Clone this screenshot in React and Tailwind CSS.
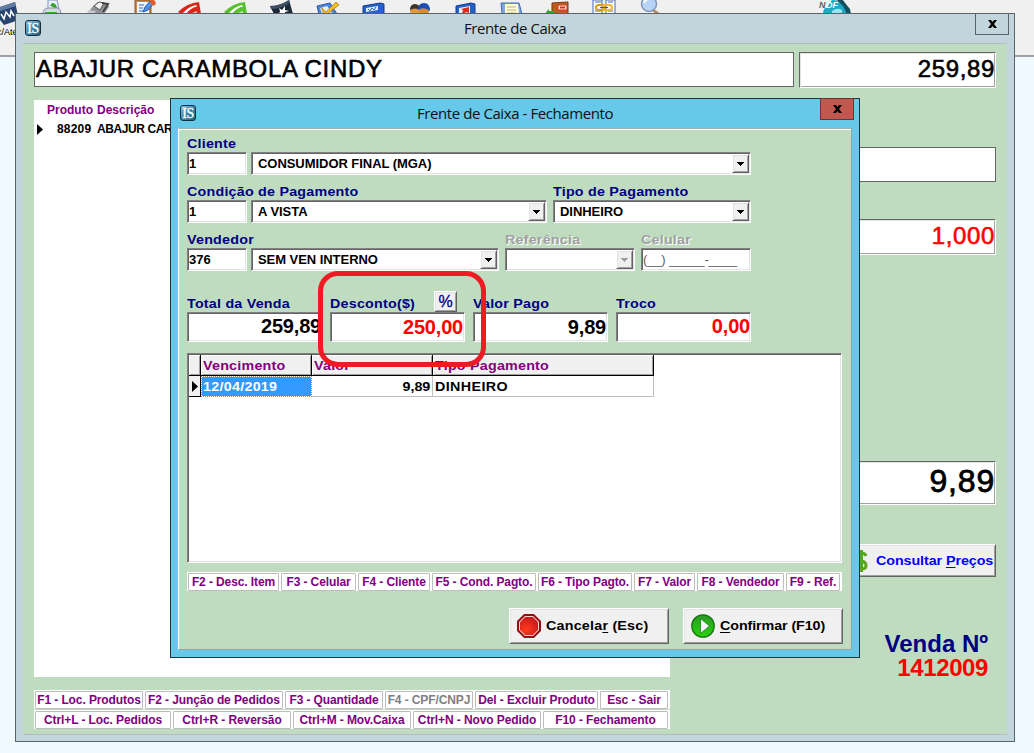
import React from "react";

const sys = "font-bold text-[13px] whitespace-nowrap";
const sunken =
  "bg-white border border-t-[#808080] border-l-[#808080] border-b-white border-r-white shadow-[inset_1px_1px_0_#646464,inset_-1px_-1px_0_#e3e3e3]";
const raised =
  "bg-[#f0f0f0] border border-t-white border-l-white border-b-[#646464] border-r-[#646464] shadow-[inset_1px_1px_0_#e3e3e3,inset_-1px_-1px_0_#a0a0a0]";
const flat = "bg-white border border-[#646464]";
const etched =
  "bg-white border border-t-[#646464] border-l-[#646464] border-b-white border-r-white shadow-[inset_1px_1px_0_#e3e3e3,inset_-1px_-1px_0_#a0a0a0]";

function Wide({ children, className = "tracking-[0.2px]", right }) {
  return (
    <span className={`inline-block scale-x-[1.1] ${right ? "origin-right" : "origin-left"} ${className}`}>
      {children}
    </span>
  );
}

function AppIcon() {
  return (
    <div className="flex h-4 w-4 items-center justify-center rounded-[3px] border border-[#12303f] bg-linear-to-br from-[#8fc3de] via-[#3f87ad] to-[#2a617f] pt-px font-['Liberation_Serif',serif] text-[14px] leading-none tracking-[-0.4px] text-white [-webkit-text-stroke:0.3px]">
      IS
    </div>
  );
}

function Caption({ children }) {
  return (
    <span className="-mt-[2px] font-['Open_Sans',sans-serif] text-[15px] leading-5 tracking-[-0.42px] whitespace-nowrap text-[#111]">
      {children}
    </span>
  );
}

function Cross() {
  return (
    <svg width="9" height="8" viewBox="0 0 9 8">
      <path d="M0 0h3l1.5 2L6 0h3L6 4l3 4H6L4.500 6 3 8H0l3-4z" fill="#000" />
    </svg>
  );
}

function Label({ children, disabled }) {
  return (
    <div
      className={`${sys} h-[17px] leading-[17px] ${
        disabled ? "text-[#a0a0a0] [text-shadow:1px_1px_0_#fff]" : "text-[#000080]"
      }`}
    >
      <Wide>{children}</Wide>
    </div>
  );
}

function Edit({ children, className = "" }) {
  return (
    <div className={`${sunken} h-[23px] pl-px text-[13px] leading-[21px] ${className}`}>
      {children}
    </div>
  );
}

function Combo({ children, className = "", disabled }) {
  return (
    <div
      className={`${sunken} flex h-[23px] items-center justify-between pl-[6px] pr-px text-[13px] font-bold tracking-[-0.05px] whitespace-nowrap ${className}`}
    >
      <span>{children}</span>
      <span className={`${raised} flex h-[19px] w-[17px] items-center justify-center`}>
        <svg width="7" height="4" viewBox="0 0 7 4" shapeRendering="crispEdges">
          <path d="M0 0h7v1H6v1H5v1H4v1H3V3H2V2H1V1H0z" fill={disabled ? "#a0a0a0" : "#000"} />
        </svg>
      </span>
    </div>
  );
}

function Key({ children, className = "", muted }) {
  return (
    <div
      className={`flex h-[18px] shrink-0 items-center justify-center rounded-[1px] border border-[#bdbdbd] bg-white text-[12px] font-bold leading-none tracking-[-0.1px] whitespace-nowrap ${
        muted ? "text-[#808080]" : "text-[#800080]"
      } ${className}`}
    >
      {children}
    </div>
  );
}

const toolIcons = [
  <g key="printer">
    <path d="M8 9V0h9l2 9z" fill="#e8f1fb" stroke="#7f95b5" />
    <path d="M12 3q6 0 5 9h-3q1-6-4-6z" fill="#35a528" />
    <path d="M3 14q0-6 6-6l9 0q3 1 3 6z" fill="#d3dae4" stroke="#8390a4" />
    <path d="M5 13h12" stroke="#40a832" strokeWidth="2" />
  </g>,
  <g key="fax">
    <path d="M1 14l6-8 5-4 10 2 1 3-5 7z" fill="#8f9193" />
    <path d="M8 6l5-4 5 1-4 7z" fill="#eee" stroke="#555" />
    <path d="M16 3l6 1-5 8" fill="none" stroke="#444" strokeWidth="2" />
    <path d="M2 10l8 1-2 3H1z" fill="#c8cacc" />
  </g>,
  <g key="clipboard">
    <path d="M3 0h16v14H3z" fill="#c98a4b" stroke="#8d5523" />
    <path d="M5 2h12v12H5z" fill="#eef6ff" />
    <path d="M7 5h5M7 8h4M7 11h6" stroke="#6297dc" strokeWidth="1.500" />
    <path d="M11 12l2-5 6-7 3 3-6 7z" fill="#5295e8" stroke="#275ca7" />
    <path d="M18 0h4l2 3-2 3-4-3z" fill="#e95b2c" />
  </g>,
  <g key="red">
    <path d="M0 12Q9 3 21 2l2 12H3z" fill="#d92718" />
    <path d="M5 13Q10 7 18 5l1 1.500Q12 8 8 14z" fill="#fff" />
    <path d="M13 14q2-2 6-3v3z" fill="#f6b1a9" />
  </g>,
  <g key="green">
    <path d="M0 12Q9 3 21 2l2 12H3z" fill="#57c12c" />
    <path d="M5 13Q10 7 18 5l1 1.500Q12 8 8 14z" fill="#fff" />
    <path d="M13 14q2-2 6-3v3z" fill="#c9efb8" />
  </g>,
  <g key="dark">
    <path d="M0 6q10 0 19-6l4 14H4z" fill="#1c2836" />
    <path d="M0 6q10 0 19-6l1 3Q11 9 1 9z" fill="#3b4e62" />
    <path d="M9 8l3 2 3-4 0 4 4 1-4 1v2H9l1-3z" fill="#fff" />
  </g>,
  <g key="check">
    <path d="M1 6l13-3 7 11H3z" fill="#4b85dc" stroke="#2858a3" />
    <path d="M4 8l7-2 6 8H6z" fill="#e2eefc" />
    <path d="M5 7l5 5L20 2l3 3-12 9H8z" fill="#f5b921" stroke="#b57a0d" strokeWidth=".7" />
  </g>,
  <g key="blue">
    <path d="M1 6l17-3 4 1v10H1z" fill="#2661c9" stroke="#123e8e" />
    <path d="M4 8l12-2v4L4 12z" fill="#dfeaff" />
    <path d="M6 9l2 2 2-3 2 2 2-3" stroke="#2661c9" fill="none" />
  </g>,
  <g key="people">
    <circle cx="7" cy="11" r="5" fill="#e09a3e" />
    <path d="M2 10q0-6 5-6t5 6q-5-3-10 0z" fill="#3b332c" />
    <circle cx="16" cy="11" r="5" fill="#d98c2c" />
    <path d="M10 10q0-7 6-7t6 8q-6-5-12-1z" fill="#1c4fb4" />
  </g>,
  <g key="bluered">
    <path d="M2 6l15-3 4 1v10H2z" fill="#2661c9" stroke="#123e8e" />
    <path d="M5 8l11-2v8H5z" fill="#e8f0ff" />
    <path d="M8 14l1-4-2-1 8-2 0 7-2-2z" fill="#e12b1a" />
  </g>,
  <g key="note">
    <path d="M1 3h18l3 11H2z" fill="#7ba6e0" stroke="#3e6db3" />
    <path d="M5 4h13l1 10H5z" fill="#fffbd2" />
    <path d="M7 7h9M7 10h9M7 13h9" stroke="#b9b384" />
  </g>,
  <g key="exit">
    <path d="M6 3l16-1v12H6z" fill="#bb5f21" stroke="#7c360e" />
    <path d="M12 5h9v5h-9z" fill="#f7e5dc" stroke="#d03422" />
    <path d="M14 7.500h5" stroke="#d03422" strokeWidth="2" />
    <path d="M0 12l3-3v2h5v3H0z" fill="#35a528" />
  </g>,
  <g key="link">
    <path d="M1 0h9v14H1zM14 0h9v14h-9z" fill="#fff" stroke="#4967b5" />
    <path d="M3 2h6M3 11h6M16 2h5M16 11h5" stroke="#4967b5" />
    <rect x="4" y="5" width="9" height="5" rx="2.500" fill="none" stroke="#d89a13" strokeWidth="2" />
    <rect x="11" y="5" width="9" height="5" rx="2.500" fill="none" stroke="#efb92c" strokeWidth="2" />
    <path d="M8 7.500h8" stroke="#7a560a" />
  </g>,
  <g key="search">
    <path d="M16 9l7 5h-5l-4-3z" fill="#b98a66" />
    <circle cx="11" cy="4" r="7.500" fill="#b5d2f7" stroke="#8295b5" strokeWidth="1.500" />
    <path d="M6 3q1-4 6-4" stroke="#fff" strokeWidth="2" fill="none" />
  </g>,
];

function Desktop() {
  return (
    <div className="flex h-[57px] w-full items-start border-b-2 border-[#a0a0a0] bg-[#f0f0f0]">
      <div className="h-[54px] w-[29px] overflow-hidden">
        <svg width="20" height="27" viewBox="0 0 20 27">
          <path d="M0 7L15 2l4 18L4 25 0 20z" fill="#28456f" />
          <path d="M0 7L15 2l1 4L0 11z" fill="#5f7ca6" />
          <path d="M1 14l3 5 2-7 4 5 1-6 3 5" stroke="#fff" strokeWidth="1.500" fill="none" />
        </svg>
        <div className="-ml-[3px] text-[9px] leading-[11px] whitespace-nowrap text-black">c/Ate</div>
      </div>
      {toolIcons.map((icon, i) => (
        <div key={i} className="flex w-[46px] justify-center">
          <svg width="24" height="14" viewBox="0 0 24 14">
            {icon}
          </svg>
        </div>
      ))}
      <div className="ml-[146px]">
        <svg width="34" height="14" viewBox="0 0 34 14">
          <path d="M4 14q0-6 4-7l5-7 10 1q8 5 7 13z" fill="#21a9c4" />
          <path d="M18 0q6-2 8 3l5 6 1 5h-4l-4-8z" fill="#164f5c" />
          <path d="M13 11q5-4 10-1v4H13z" fill="#93e5f2" />
          <text x="0" y="8" fontSize="9" fontWeight="bold" fontStyle="italic" fill="#5c6468" fontFamily="Liberation Sans">N</text>
          <text x="7" y="8" fontSize="9" fontWeight="bold" fontStyle="italic" fill="#fff" fontFamily="Liberation Sans">DF</text>
        </svg>
      </div>
    </div>
  );
}

function MainWindow() {
  const big = "font-normal text-[24px] leading-[32px] tracking-[0.66px] [-webkit-text-stroke:0.6px]";
  return (
    <div className="absolute left-[15px] top-[13px] flex h-[729px] w-[1000px] flex-col border border-[#59636c] bg-[#c3d5dc] px-[7px] pb-[6px]">
      <div className="relative flex h-[29px] shrink-0 items-center justify-center">
        <div className="absolute left-[2px] top-[6px]">
          <AppIcon />
        </div>
        <Caption>Frente de Caixa</Caption>
        <div className="absolute -top-px right-[-2px] flex h-[22px] w-[34px] items-center justify-center border border-[#59636c]">
          <Cross />
        </div>
      </div>
      <div className="flex flex-1 flex-col border-y border-[#b0bcc2] bg-[#c0dcc0] pl-[11px] pr-[11px] pt-[8px]">
        <div className="flex gap-[5px]">
          <div className={`${flat} ${big} h-[35px] w-[760px] pl-px`}>ABAJUR CARAMBOLA CINDY</div>
          <div className={`${etched} ${big} h-[36px] w-[197px] text-right`}>259,89</div>
        </div>
        <div className="mt-[12px] flex h-[577px] justify-between">
          <div className="w-[636px] bg-white pt-[3px] text-[12px] font-bold">
            <div className="flex h-[15px] gap-[4px] pl-[13px] leading-[15px] text-[#800080]">
              <span>Produto</span>
              <span>Descrição</span>
            </div>
            <div className="mt-[4px] flex h-[15px] items-center whitespace-nowrap leading-[15px] text-black">
              <svg className="ml-[3px] mr-[14px]" width="6" height="11" viewBox="0 0 6 11">
                <path d="M0 0l6 5.500L0 11z" fill="#000" />
              </svg>
              <span className="w-[40px] tracking-[0.2px]">88209</span>
              <span className="tracking-[-0.4px]">ABAJUR CARAMBOLA CINDY</span>
            </div>
          </div>
          <div className="flex w-[306px] flex-col items-stretch pt-[47px] [&>*]:shrink-0">
            <div className={`${flat} h-[35px]`} />
            <div className={`${etched} ${big} mt-[37px] h-[36px] text-right text-[#ff0000]`}>1,000</div>
            <div className={`${etched} mt-[206px] h-[44px] text-right text-[32px] leading-[39px] tracking-[0.8px] [-webkit-text-stroke:0.8px]`}>
              9,89
            </div>
            <div className={`${raised} ${sys} mt-[39px] flex h-[33px] w-[156px] items-center self-end pl-[14px] text-[#0000ff]`}>
              <svg width="13" height="24" viewBox="0 0 13 24" className="mr-[8px] shrink-0">
                <path
                  d="M11 7Q10 4 6.500 4T2 8q0 3 4.500 4t4.500 4.500Q11 20 6.500 20T1.500 16.500M6.500 1v22"
                  fill="none"
                  stroke="#5fa41c"
                  strokeWidth="3"
                />
              </svg>
              <Wide className="tracking-[-0.07px]">
                Consultar <u className="underline-offset-2">P</u>reços
              </Wide>
            </div>
            <div className="mt-[55px] pr-[8px] text-right text-[24px] font-bold leading-[24px]">
              <div className="text-[#000080]">Venda Nº</div>
              <div className="tracking-[-0.4px] text-[#ff0000]">1412009</div>
            </div>
          </div>
        </div>
        <div className="mt-[13px] flex h-[19px] w-[636px] items-center gap-[2px] bg-white pl-px">
          <Key className="w-[108px]">F1 - Loc. Produtos</Key>
          <Key className="w-[138px]">F2 - Junção de Pedidos</Key>
          <Key className="w-[98px]">F3 - Quantidade</Key>
          <Key className="w-[88px]" muted>F4 - CPF/CNPJ</Key>
          <Key className="w-[123px]">Del - Excluir Produto</Key>
          <Key className="w-[68px]">Esc - Sair</Key>
        </div>
        <div className="mt-px flex h-[19px] w-[636px] items-center gap-[2px] bg-white pl-px">
          <Key className="w-[136px]">Ctrl+L - Loc. Pedidos</Key>
          <Key className="w-[118px]">Ctrl+R - Reversão</Key>
          <Key className="w-[118px]">Ctrl+M - Mov.Caixa</Key>
          <Key className="w-[128px]">Ctrl+N - Novo Pedido</Key>
          <Key className="w-[125px]">F10 - Fechamento</Key>
        </div>
      </div>
    </div>
  );
}

function Amount({ label, children, extra, className = "" }) {
  return (
    <div className="w-[135px]">
      <div className="flex h-[21px] items-center justify-between pt-[4px]">
        <Label>{label}</Label>
        {extra}
      </div>
      <div
        className={`${sunken} h-[30px] overflow-hidden text-right text-[20px] font-bold leading-[26px] tracking-[-0.2px] ${className}`}
      >
        {children}
      </div>
    </div>
  );
}

function HeadCell({ children, className }) {
  return (
    <div
      className={`${sys} h-[21px] border-b border-r border-black bg-[#f0f0f0] pl-[2px] leading-[22px] text-[#800080] shadow-[inset_1px_1px_0_#fff,inset_-1px_-1px_0_#a0a0a0] ${className}`}
    >
      <Wide>{children}</Wide>
    </div>
  );
}

function PaymentGrid() {
  return (
    <div className={`${sunken} h-[210px] w-[655px] p-px`}>
      <div className="flex">
        <HeadCell className="w-[12px]" />
        <HeadCell className="w-[111px]">Vencimento</HeadCell>
        <HeadCell className="w-[121px]">Valor</HeadCell>
        <HeadCell className="w-[221px]">Tipo Pagamento</HeadCell>
      </div>
      <div className={`${sys} flex h-[21px] leading-[22px] text-black`}>
        <div className="flex w-[12px] items-center justify-center border-b border-r border-black bg-[#f0f0f0]">
          <svg width="6" height="11" viewBox="0 0 6 11">
            <path d="M0 0l6 5.500L0 11z" fill="#000" />
          </svg>
        </div>
        <div className="w-[111px] border border-dotted border-[#d08030] bg-[#3399ff] bg-clip-padding pl-px leading-[20px] text-white">
          <Wide className="tracking-[0.25px]">12/04/2019</Wide>
        </div>
        <div className="w-[121px] border-b border-r border-[#c0c0c0] pr-[2px] text-right">
          <Wide right className="tracking-normal">9,89</Wide>
        </div>
        <div className="w-[221px] border-b border-r border-[#c0c0c0] pl-[2px]">
          <Wide className="tracking-[0.35px]">DINHEIRO</Wide>
        </div>
      </div>
    </div>
  );
}

function StopIcon() {
  return (
    <svg width="24" height="24" viewBox="0 0 24 24">
      <defs>
        <radialGradient id="stop" cx=".35" cy=".7" r=".8">
          <stop offset="0" stopColor="#ff3a1c" />
          <stop offset="1" stopColor="#c3181c" />
        </radialGradient>
      </defs>
      <path d="M7.500 1h9L23 7.500v9L16.500 23h-9L1 16.500v-9z" fill="#f3d5d3" stroke="#930f12" strokeWidth="2" />
      <path d="M8.200 3h7.600L21 8.200v7.600L15.800 21H8.200L3 15.800V8.200z" fill="url(#stop)" />
    </svg>
  );
}

function PlayIcon() {
  return (
    <svg width="24" height="24" viewBox="0 0 24 24">
      <defs>
        <linearGradient id="play" x1="0" y1="0" x2="0" y2="1">
          <stop offset="0" stopColor="#2a9a20" />
          <stop offset="1" stopColor="#27d40e" />
        </linearGradient>
      </defs>
      <circle cx="12" cy="12" r="11.200" fill="url(#play)" stroke="#16750f" strokeWidth="1.300" />
      <path d="M9.500 4.500v15l9-7.500z" fill="#f4f7ff" stroke="#178010" strokeWidth=".8" />
    </svg>
  );
}

function ClosingDialog() {
  return (
    <div className="absolute left-[170px] top-[98px] flex h-[560px] w-[690px] flex-col border border-[#26333b] bg-[#66c9ea] px-[7px] pb-[7px]">
      <div className="relative flex h-[29px] shrink-0 items-center justify-center">
        <div className="absolute left-[2px] top-[6px]">
          <AppIcon />
        </div>
        <Caption>Frente de Caixa - Fechamento</Caption>
        <div className="absolute -top-px right-[-2px] flex h-[22px] w-[34px] items-center justify-center border border-[#6a3532] bg-[#c1584f]">
          <Cross />
        </div>
      </div>
      <div className="flex flex-1 flex-col border border-b-[#97a5a5] border-l-white border-r-[#97a5a5] border-t-[#9fb4b4] bg-[#c0dcc0] pl-[8px] shadow-[inset_0_1px_0_#fff]">
        <div className="mt-[6px]">
          <Label>Cliente</Label>
          <div className="flex gap-[4px]">
            <Edit className="w-[60px] font-bold">1</Edit>
            <Combo className="w-[500px]">CONSUMIDOR FINAL (MGA)</Combo>
          </div>
        </div>
        <div className="mt-[8px] flex gap-[6px]">
          <div>
            <Label>Condição de Pagamento</Label>
            <div className="flex gap-[4px]">
              <Edit className="w-[60px] font-bold">1</Edit>
              <Combo className="w-[296px]">A VISTA</Combo>
            </div>
          </div>
          <div>
            <Label>Tipo de Pagamento</Label>
            <Combo className="w-[198px]">DINHEIRO</Combo>
          </div>
        </div>
        <div className="mt-[8px] flex gap-[6px]">
          <div>
            <Label>Vendedor</Label>
            <div className="flex gap-[4px]">
              <Edit className="w-[60px] font-bold">376</Edit>
              <Combo className="w-[248px]">SEM VEN INTERNO</Combo>
            </div>
          </div>
          <div>
            <Label disabled>Referência</Label>
            <Combo className="w-[130px]" disabled />
          </div>
          <div>
            <Label disabled>Celular</Label>
            <Edit className="w-[110px] text-[#606060]">
              <span className="whitespace-pre tracking-[-0.15px]">(__) _____-____</span>
            </Edit>
          </div>
        </div>
        <div className="mt-[20px] flex gap-[8px]">
          <Amount label="Total da Venda">259,89</Amount>
          <Amount
            label="Desconto($)"
            className="pr-px pt-px text-[#ff0000]"
            extra={
              <div className={`${raised} -mt-[4px] mr-[8px] flex h-[21px] w-[23px] shrink-0 items-center justify-center text-[16px] text-[#000080] [-webkit-text-stroke:0.3px]`}>
                %
              </div>
            }
          >
            250,00
          </Amount>
          <Amount label="Valor Pago" className="pr-px pt-px">9,89</Amount>
          <Amount label="Troco" className="text-[#ff0000]">0,00</Amount>
        </div>
        <div className="mt-[11px]">
          <PaymentGrid />
        </div>
        <div className="mt-[9px] flex h-[19px] w-[655px] items-center gap-[2px] bg-white pl-px">
          <Key className="w-[91px]">F2 - Desc. Item</Key>
          <Key className="w-[75px]">F3 - Celular</Key>
          <Key className="w-[72px]">F4 - Cliente</Key>
          <Key className="w-[104px]">F5 - Cond. Pagto.</Key>
          <Key className="w-[94px]">F6 - Tipo Pagto.</Key>
          <Key className="w-[61px]">F7 - Valor</Key>
          <Key className="w-[87px]">F8 - Vendedor</Key>
          <Key className="w-[54px]">F9 - Ref.</Key>
        </div>
        <div className="mt-[17px] flex justify-end gap-[14px] pr-[8px]">
          <button className={`${raised} ${sys} flex h-[36px] w-[160px] items-center gap-[5px] pl-[7px]`}>
            <StopIcon />
            <Wide>Cancela<u className="underline-offset-2">r</u> (Esc)</Wide>
          </button>
          <button className={`${raised} ${sys} flex h-[36px] w-[160px] items-center gap-[5px] pl-[7px]`}>
            <PlayIcon />
            <Wide className="tracking-[-0.08px]"><u className="underline-offset-2">C</u>onfirmar (F10)</Wide>
          </button>
        </div>
      </div>
    </div>
  );
}

export default function App() {
  return (
    <div className="relative h-[753px] w-[1034px] overflow-hidden bg-[#eefaff] font-['Liberation_Sans',Arial,sans-serif] text-black">
      <Desktop />
      <MainWindow />
      <ClosingDialog />
      <div className="absolute left-[318px] top-[271px] h-[96px] w-[168px] rounded-[20px] border-[5px] border-[#ed1c24]" />
    </div>
  );
}
